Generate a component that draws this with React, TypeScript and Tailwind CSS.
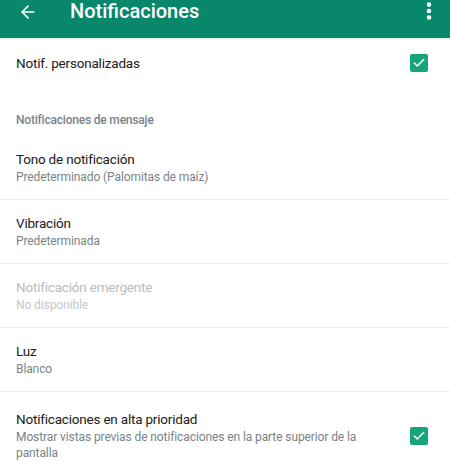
import { ArrowLeft, Check, EllipsisVertical } from "lucide-react";

type Setting = {
  readonly title: string;
  readonly summary: string;
  readonly disabled?: boolean;
  readonly checked?: boolean;
};

const MESSAGE_SETTINGS: Setting[] = [
  { title: "Tono de notificación", summary: "Predeterminado (Palomitas de maíz)" },
  { title: "Vibración", summary: "Predeterminada" },
  { title: "Notificación emergente", summary: "No disponible", disabled: true },
  { title: "Luz", summary: "Blanco" },
  {
    title: "Notificaciones en alta prioridad",
    summary: "Mostrar vistas previas de notificaciones en la parte superior de la pantalla",
    checked: true,
  },
];

const CheckBox = () => (
  <div className="flex h-[18px] w-[18px] shrink-0 items-center justify-center rounded-[2px] bg-[#17a47b]">
    <Check size={14} strokeWidth={2.6} className="text-white" />
  </div>
);

const SettingRow = ({ title, summary, disabled = false, checked }: Setting) => (
  <div
    className={`flex min-h-[64px] items-center border-b border-[#efefef] pb-[14px] pl-4 pr-[22px] ${checked ? "pt-[18px]" : "pt-[14px]"}`}
  >
    <div className="flex-1 pr-12">
      <div
        className={`text-[13.5px] leading-[19px] tracking-[-0.2px] ${disabled ? "text-[#b8bcbe]" : "text-[#202020]"}`}
      >
        {title}
      </div>
      <div
        className={`text-[12px] leading-[16px] tracking-[-0.1px] ${disabled ? "text-[#c4c8ca]" : "text-[#7b8387]"}`}
      >
        {summary}
      </div>
    </div>
    {checked && <CheckBox />}
  </div>
);

export default function App() {
  return (
    <div className="h-[465px] w-[450px] overflow-hidden bg-white font-['Roboto',sans-serif]">
      <header className="flex h-[38px] items-center bg-[#08876b] pb-[16px] text-white shadow-[0_1px_2px_rgba(0,80,60,0.15)]">
        <ArrowLeft size={20} strokeWidth={2} className="ml-[18px] mt-[2px]" />
        <h1 className="ml-[32px] flex-1 text-[20px] font-medium leading-[20px]">Notificaciones</h1>
        <EllipsisVertical size={22} strokeWidth={3} className="mr-[10px]" />
      </header>

      <div className="flex h-[50px] items-center pl-4 pr-[22px]">
        <div className="flex-1 text-[13.5px] tracking-[-0.2px] text-[#202020]">Notif. personalizadas</div>
        <CheckBox />
      </div>

      <div className="pl-4 pt-[24px] pb-[8px] text-[12px] font-medium leading-[16px] tracking-[-0.2px] text-[#7b8387]">
        Notificaciones de mensaje
      </div>

      {MESSAGE_SETTINGS.map((setting) => (
        <SettingRow key={setting.title} {...setting} />
      ))}
    </div>
  );
}
